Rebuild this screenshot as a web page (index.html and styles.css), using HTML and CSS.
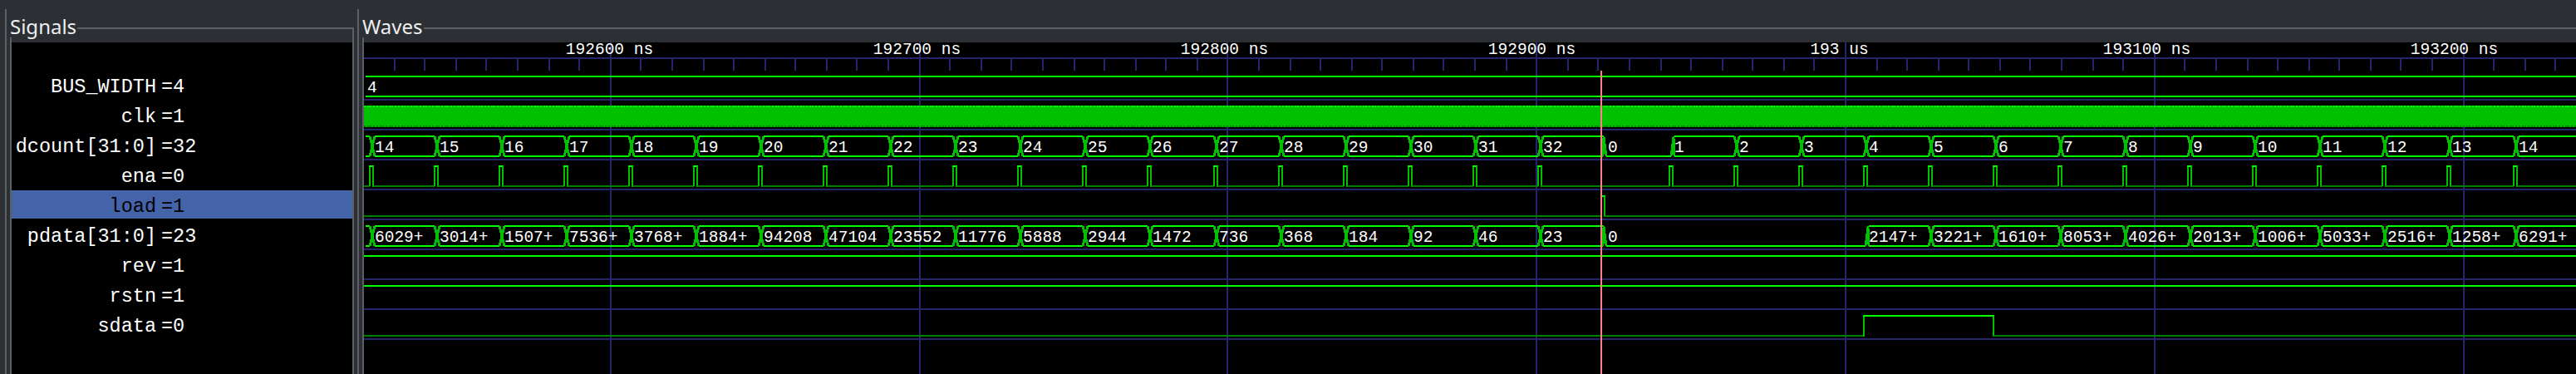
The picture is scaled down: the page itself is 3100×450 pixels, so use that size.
FILE: index.html
```html
<!DOCTYPE html>
<html lang="en">
  <head>
    <meta charset="UTF-8" />
    <title>Waveform viewer</title>
    <link rel="stylesheet" href="styles.css">
  </head>
  <body>
    <div class="app">
      <section class="pane pane-signals">
        <div class="frame-head">
          <span class="frame-title">Signals</span>
          <span class="frame-rule"></span>
        </div>
        <div class="frame-body">
          <ul class="signal-list">
            <li class="signal"><span class="signal-name">BUS_WIDTH</span><span class="signal-value">=4</span></li>
            <li class="signal"><span class="signal-name">clk</span><span class="signal-value">=1</span></li>
            <li class="signal"><span class="signal-name">dcount[31:0]</span><span class="signal-value">=32</span></li>
            <li class="signal"><span class="signal-name">ena</span><span class="signal-value">=0</span></li>
            <li class="signal selected"><span class="signal-name">load</span><span class="signal-value">=1</span></li>
            <li class="signal"><span class="signal-name">pdata[31:0]</span><span class="signal-value">=23</span></li>
            <li class="signal"><span class="signal-name">rev</span><span class="signal-value">=1</span></li>
            <li class="signal"><span class="signal-name">rstn</span><span class="signal-value">=1</span></li>
            <li class="signal"><span class="signal-name">sdata</span><span class="signal-value">=0</span></li>
          </ul>
        </div>
      </section>

      <section class="pane pane-waves">
        <div class="frame-head">
          <span class="frame-title">Waves</span>
          <span class="frame-rule"></span>
        </div>
        <div class="frame-body">
          <svg id="waves" class="wave-canvas" viewBox="438 51 2662 399" width="2662" height="399"></svg>
        </div>
      </section>
    </div>

    <script src="waves.js"></script>
  </body>
</html>
```

FILE: styles.css
```css
* {
  box-sizing: border-box;
}

body {
  margin: 0;
  height: 450px;
  overflow: hidden;
  background: #2c2f33;
  color: #eceef0;
  font-family: "Noto Sans", sans-serif;
}

.app {
  display: flex;
  gap: 4px;
  height: 450px;
  padding: 11px 0 0 6px;
}

.pane {
  display: flex;
  flex-direction: column;
  border-left: 2px solid #5d6063;
  padding-left: 4px;
}

.pane-signals {
  width: 420px;
}

.pane-waves {
  flex: 1;
  min-width: 0;
}

.frame-head {
  display: flex;
  height: 34px;
}

.frame-title {
  font-size: 24px;
  line-height: 34px;
  height: 34px;
  margin-top: 4px;
  margin-right: 1px;
}

.frame-rule {
  flex: 1;
  margin-top: 22px;
  border-top: 2px solid #5d6063;
}

.pane-signals .frame-rule {
  border-right: 2px solid #5d6063;
}

.frame-body {
  flex: 1;
  border-left: 2px solid #5d6063;
  padding-top: 6px;
  min-height: 0;
}

.pane-signals .frame-body {
  border-right: 2px solid #5d6063;
}

.signal-list {
  list-style: none;
  margin: 0;
  padding: 34px 0 0;
  height: 399px;
  background: #000;
  display: flex;
  flex-direction: column;
  gap: 2px;
  color: #fff;
  font-family: "Liberation Mono", monospace;
  font-size: 23.5px;
}

.signal {
  display: flex;
  height: 34px;
  padding-top: 5px;
  line-height: 29px;
}

.signal-name {
  width: 174px;
  text-align: right;
  white-space: nowrap;
}

.signal-value {
  margin-left: 6px;
}

.selected {
  background: #4463a8;
  color: #000;
}

.wave-canvas {
  display: block;
  background: #000;
  overflow: visible;
}

.wave-canvas line,
.wave-canvas rect {
  shape-rendering: crispEdges;
  fill: none;
  stroke-width: 2;
}

.grid {
  stroke: #25256e;
}

.high {
  stroke: #00ff00;
}

.low {
  stroke: #008000;
}

.trans {
  stroke: #00c000;
}

.wave-canvas line.slope {
  stroke: #00c000;
  stroke-width: 2.8;
}

.cursor {
  stroke: #ff8080;
}

.wave-canvas rect.clk-fill {
  fill: #00c000;
  stroke: none;
}

.clk-top {
  stroke: #00ff00;
  stroke-dasharray: 2 1.72;
}

.clk-bottom {
  stroke: #008000;
  stroke-dasharray: 2 1.72;
}

.wave-text {
  fill: #fff;
  font-family: "Liberation Mono", monospace;
  font-size: 19.5px;
}
```

FILE: waves.js
```js
const RIGHT = 3100;
const BOTTOM = 450;
const CLOCKS = 78.12;

let svg = "";

function line(cls, x1, y1, x2, y2) {
  svg += `<line class="${cls}" x1="${x1}" y1="${y1}" x2="${x2}" y2="${y2}" />`;
}

function text(x, y, value) {
  svg += `<text class="wave-text" x="${x}" y="${y}">${value}</text>`;
}

// the viewer snaps everything to even pixels
function snap(x) {
  return 2 * Math.floor(x / 2);
}

function drawGrid() {
  line("grid", 438, 70, RIGHT, 70);
  for (let k = 0; k < 72; k++) {
    const x = snap(734.6 + 37.16 * (k - 8)) + 1;
    if (x < 438 || x > RIGHT) continue;
    line("grid", x, 69, x, 85);
    if ((k - 8) % 10 === 0) line("grid", x, 51, x, BOTTOM);
  }
  for (let row = 0; row < 9; row++) {
    const y = 120 + 36 * row;
    line("grid", 438, y, RIGHT, y);
  }
}

function drawTimes() {
  const labels = [
    "192600 ns",
    "192700 ns",
    "192800 ns",
    "192900 ns",
    "193 us",
    "193100 ns",
    "193200 ns",
  ];
  labels.forEach((label, n) => {
    const width = label.length * 11.7;
    text(733.5 + 370 * n - width / 2, 65, label);
  });
}

// edges of the counter: 20 clocks, one extra clock on the wrap, then 14 more
function edges() {
  const list = [];
  for (let k = 0; k < 20; k++) list.push(snap(444.5 + CLOCKS * k));
  for (let j = 0; j < 14; j++) list.push(snap(2008.5 + CLOCKS * j));
  return list;
}

function drawBus(top, stops) {
  const bottom = top + 24;
  let prevEnd = 440;
  let prevZero = false;

  stops.forEach((stop, i) => {
    const L = stop.at;
    const isZero = stop.value === "0";
    const nextAt = i + 1 < stops.length ? stops[i + 1].at : RIGHT;

    if (prevZero) {
      line("slope", L + 3, bottom, L + 6, top);
      line("slope", L + 6, top, L + 7, bottom);
      prevEnd = L + 7;
    } else if (isZero) {
      line("high", prevEnd, top, L + 2, top);
      line("high", prevEnd, bottom, L + 1, bottom);
      line("slope", L + 1, bottom, L + 2, top);
      line("slope", L + 2, top, L + 5, bottom);
      prevEnd = L + 5;
    } else {
      line("high", prevEnd, top, L + 1, top);
      line("high", prevEnd, bottom, L + 1, bottom);
      line("slope", L + 1, bottom, L + 7, top);
      line("slope", L + 1, top, L + 7, bottom);
      prevEnd = L + 7;
    }

    text(L + 7, top + 19, stop.value);
    prevZero = isZero;

    if (i === stops.length - 1) {
      line("high", prevEnd, bottom, RIGHT, bottom);
      if (!isZero) line("high", prevEnd, top, RIGHT, top);
    } else if (isZero) {
      line("high", prevEnd, bottom, nextAt + 3, bottom);
      prevEnd = nextAt + 3;
    }
  });
}

function busStops(list, values) {
  return values.map((value, i) => ({ at: list[i], value }));
}

function drawRows() {
  const at = edges();

  // BUS_WIDTH
  line("high", 440, 92, RIGHT, 92);
  line("high", 440, 116, RIGHT, 116);
  text(442, 111, "4");

  // clk
  svg += `<rect class="clk-fill" x="438" y="127" width="2662" height="26" />`;
  line("clk-top", 438, 128, RIGHT, 128);
  line("clk-bottom", 438, 152, RIGHT, 152);

  // dcount
  const counts = [];
  for (let n = 14; n <= 32; n++) counts.push(String(n));
  counts.push("0");
  for (let n = 1; n <= 14; n++) counts.push(String(n));
  drawBus(164, busStops(at, counts));

  // ena
  let from = 438;
  at.forEach((L, i) => {
    if (i === 19) return;
    line("low", from, 224, L + 1, 224);
    line("trans", L + 1, 224, L + 1, 199);
    line("high", L, 200, L + 6, 200);
    line("trans", L + 5, 200, L + 5, 225);
    from = L + 5;
  });
  line("low", from, 224, RIGHT, 224);

  // load
  line("low", 438, 260, 1927, 260);
  line("high", 1927, 236, 1932, 236);
  line("trans", 1931, 236, 1931, 261);
  line("low", 1931, 260, RIGHT, 260);

  // pdata: holds 0 from the wrap until the counter reaches 4
  const data = [
    "6029+", "3014+", "1507+", "7536+", "3768+", "1884+", "94208", "47104",
    "23552", "11776", "5888", "2944", "1472", "736", "368", "184", "92", "46",
    "23", "0", "2147+", "3221+", "1610+", "8053+", "4026+", "2013+", "1006+",
    "5033+", "2516+", "1258+", "6291+",
  ];
  const dataEdges = at.slice(0, 20).concat(at.slice(23));
  drawBus(272, busStops(dataEdges, data));

  // rev, rstn
  line("high", 438, 308, RIGHT, 308);
  line("high", 438, 344, RIGHT, 344);

  // sdata
  line("low", 438, 404, 2243, 404);
  line("trans", 2243, 405, 2243, 379);
  line("high", 2242, 380, 2400, 380);
  line("trans", 2399, 380, 2399, 405);
  line("low", 2399, 404, RIGHT, 404);
}

drawGrid();
drawTimes();
drawRows();
line("cursor", 1927, 85, 1927, BOTTOM);
document.getElementById("waves").innerHTML = svg;
```
